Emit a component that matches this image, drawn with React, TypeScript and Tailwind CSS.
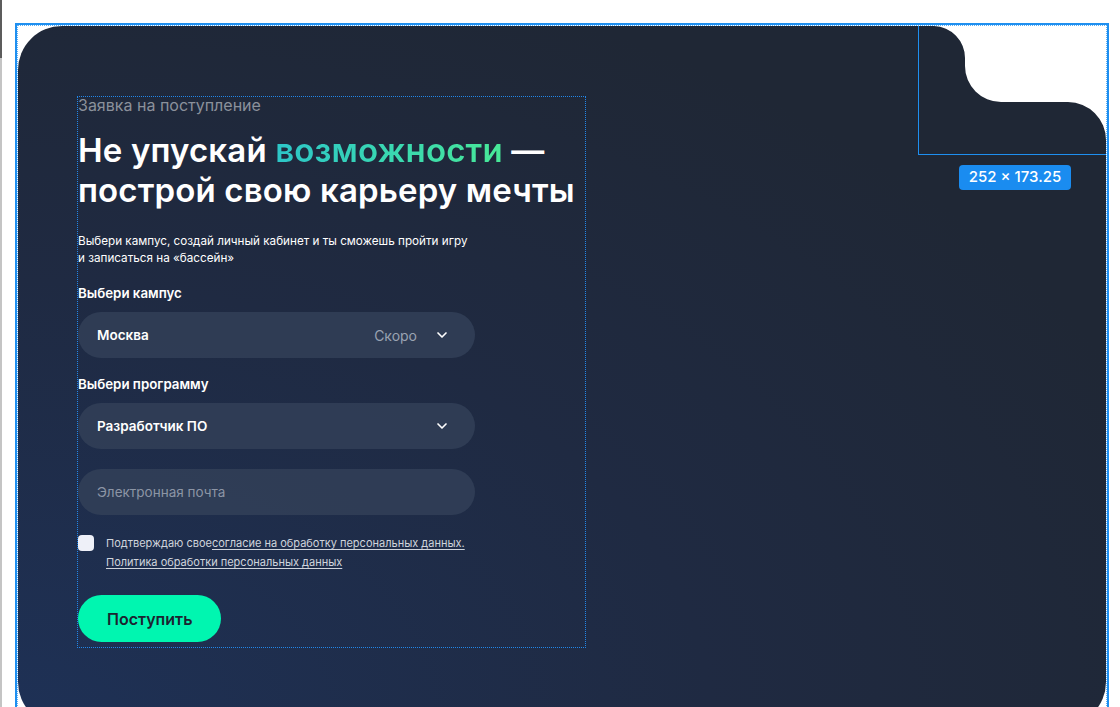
import React from "react";
import { ChevronDown } from "lucide-react";

const Select = ({ value, hint }: { value: string; hint?: string }) => (
  <div className="flex h-[46px] w-[397px] items-center rounded-full bg-[#334159]/80 pl-[19px] pr-[25px]">
    <span className="text-[13.5px] font-semibold text-white">{value}</span>
    {hint && <span className="ml-auto text-[14px] text-[#9aa3b2]">{hint}</span>}
    <ChevronDown
      size={16}
      strokeWidth={2.5}
      className={`text-white ${hint ? "ml-[17px]" : "ml-auto"}`}
    />
  </div>
);

export default function App() {
  return (
    <div className="flex min-h-screen bg-white font-['Inter',sans-serif]">
      {/* window edge */}
      <div className="flex w-[2px] flex-col">
        <div className="h-[58px] bg-[#5c5c5c]" />
        <div className="flex-1 bg-[#c4c4c4]" />
      </div>

      {/* selection frame */}
      <div className="ml-[13px] mt-[23px] w-[1094px] border-2 border-b-0 border-[#1e8ff0]">
        <div className="border border-b-0 border-dotted border-[#1e8ff0]/70">
          <div className="relative h-[700px] overflow-hidden rounded-[44px] rounded-tr-none bg-[radial-gradient(ellipse_at_bottom_left,#1e3156_0%,#1f2a42_45%,#1f2735_80%)] pl-[59px] pt-[70px]">
            {/* top-right notch */}
            <div className="absolute right-0 top-0 h-[129px] w-[188px] border-b border-l border-[#1e8ff0]">
              <svg width="188" height="129" viewBox="0 0 188 129" className="absolute -left-px top-0">
                <path
                  d="M16 0 A32 32 0 0 1 47 32 L47 40 A36 36 0 0 0 83 76 L150 76 A38 38 0 0 1 188 114 L188 0 Z"
                  fill="#ffffff"
                />
              </svg>
            </div>
            <div className="absolute right-[35px] top-[139px] flex h-[25px] w-[112px] items-center justify-center rounded-[4px] bg-[#1a8cf0] text-[15px] font-medium text-white">
              252 × 173.25
            </div>

            {/* form */}
            <div className="w-[509px] border border-dotted border-[#2186e8] pb-[5px]">
              <p className="-mt-px text-[16px] leading-[18px] text-[#8b919b]">Заявка на поступление</p>
              <h1 className="mt-[16px] text-[33px] font-semibold leading-[40px] tracking-[0.15px] text-white">
                Не упускай{" "}
                <span className="bg-gradient-to-r from-[#2dc6c8] to-[#48e897] bg-clip-text text-transparent">
                  возможности
                </span>{" "}
                —
                <br />
                построй свою карьеру мечты
              </h1>
              <p className="mt-[23px] text-[11.7px] leading-[17px] text-white">
                Выбери кампус, создай личный кабинет и ты сможешь пройти игру
                <br />и записаться на «бассейн»
              </p>

              <div className="mt-[17px] text-[13.3px] font-semibold leading-[18px] text-white">Выбери кампус</div>
              <div className="mt-[10px]">
                <Select value="Москва" hint="Скоро" />
              </div>

              <div className="mt-[17px] text-[13.3px] font-semibold leading-[18px] text-white">Выбери программу</div>
              <div className="mt-[10px]">
                <Select value="Разработчик ПО" />
              </div>

              <div className="mt-[20px] flex h-[46px] w-[397px] items-center rounded-full bg-[#334159]/80 pl-[19px]">
                <span className="text-[13.5px] text-[#8c95a5]">Электронная почта</span>
              </div>

              <div className="mt-[19px] flex gap-[12px]">
                <div className="mt-px h-[16px] w-[16px] shrink-0 rounded-[4px] bg-[#eef0f8]" />
                <div className="text-[11px] leading-[19px] text-[#cfd4dc]">
                  Подтверждаю свое
                  <span className="underline underline-offset-2">согласие на обработку персональных данных.</span>
                  <br />
                  <span className="underline underline-offset-2">Политика обработки персональных данных</span>
                </div>
              </div>

              <button className="mt-[23px] flex h-[47px] items-center rounded-full bg-[#00f6b0] px-[29px] text-[16px] font-semibold text-[#1c2430]">
                Поступить
              </button>
            </div>
          </div>
        </div>
      </div>
    </div>
  );
}
